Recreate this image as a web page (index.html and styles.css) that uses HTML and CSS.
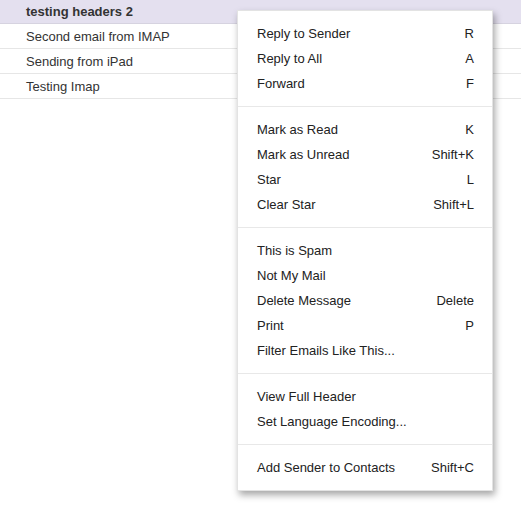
FILE: index.html
```html
<!DOCTYPE html>
<html>
<head>
<meta charset="utf-8">
<link rel="stylesheet" href="styles.css">
</head>
<body>
<div class="list">
  <div class="row row-head">testing headers 2</div>
  <div class="row">Second email from IMAP</div>
  <div class="row">Sending from iPad</div>
  <div class="row">Testing Imap</div>
</div>
<div class="menu">
  <div class="group">
    <div class="item"><span>Reply to Sender</span><span>R</span></div>
    <div class="item"><span>Reply to All</span><span>A</span></div>
    <div class="item"><span>Forward</span><span>F</span></div>
  </div>
  <div class="group">
    <div class="item"><span>Mark as Read</span><span>K</span></div>
    <div class="item"><span>Mark as Unread</span><span>Shift+K</span></div>
    <div class="item"><span>Star</span><span>L</span></div>
    <div class="item"><span>Clear Star</span><span>Shift+L</span></div>
  </div>
  <div class="group">
    <div class="item"><span>This is Spam</span></div>
    <div class="item"><span>Not My Mail</span></div>
    <div class="item"><span>Delete Message</span><span>Delete</span></div>
    <div class="item"><span>Print</span><span>P</span></div>
    <div class="item"><span>Filter Emails Like This...</span></div>
  </div>
  <div class="group">
    <div class="item"><span>View Full Header</span></div>
    <div class="item"><span>Set Language Encoding...</span></div>
  </div>
  <div class="group">
    <div class="item"><span>Add Sender to Contacts</span><span>Shift+C</span></div>
  </div>
</div>
</body>
</html>
```
FILE: styles.css
```css
html, body {
  margin: 0;
  padding: 0;
  background: #ffffff;
}
body {
  font-family: "Liberation Sans", Arial, sans-serif;
  font-size: 13px;
  color: #333333;
  position: relative;
  width: 521px;
  height: 521px;
  overflow: hidden;
}
.list {
  display: flex;
  flex-direction: column;
}
.row {
  height: 24px;
  line-height: 26px;
  padding-left: 26px;
  border-bottom: 1px solid #e6e6e6;
}
.row-head {
  background: #e4e0ef;
  font-weight: bold;
  height: 23px;
  line-height: 24px;
  border-bottom: 1px solid #d6d3e0;
}
.menu {
  position: absolute;
  left: 237px;
  top: 10px;
  width: 256px;
  background: #ffffff;
  border: 1px solid #e3e3e3;
  box-sizing: border-box;
  box-shadow: 2px 4px 7px rgba(0, 0, 0, 0.35);
  color: #222222;
}
.group {
  padding: 10px 0;
  border-top: 1px solid #e8e8e8;
}
.group:first-child {
  border-top: none;
}
.item {
  height: 25px;
  line-height: 25px;
  display: flex;
  justify-content: space-between;
  padding: 0 18px 0 19px;
}
```
